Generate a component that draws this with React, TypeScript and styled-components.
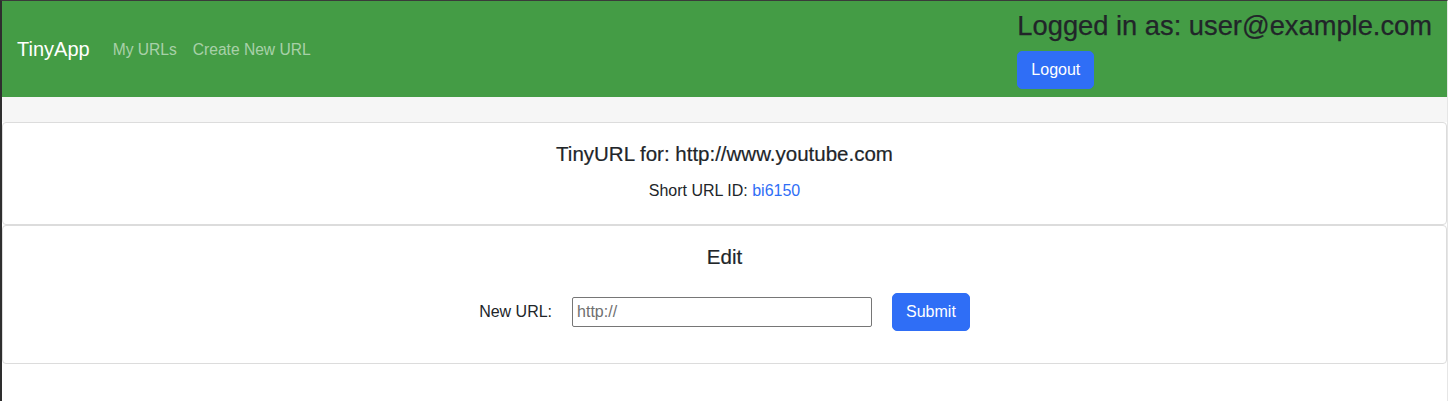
import React from "react";
import styled, { createGlobalStyle } from "styled-components";

const GlobalStyle = createGlobalStyle`
  html, body { margin: 0; padding: 0; background: #ffffff; }
  body {
    font-family: "Liberation Sans", Arial, sans-serif;
    color: #212529;
    font-size: 16px;
    line-height: 1.5;
  }
  * { box-sizing: border-box; }
`;

const Frame = styled.div`
  min-height: 401px;
  border-top: 1px solid #3a3a3a;
  border-left: 2px solid #2e2e2e;
  border-right: 1px solid #e6e6e6;
`;

const Navbar = styled.nav`
  background: #449c45;
  display: flex;
  align-items: center;
  justify-content: space-between;
  padding: 9px 15px 8px 15px;
`;

const Left = styled.div`
  display: flex;
  align-items: center;
`;

const Brand = styled.a`
  color: #ffffff;
  font-size: 20px;
  line-height: 30px;
  margin-right: 15px;
  text-decoration: none;
`;

const NavLink = styled.a`
  color: rgba(255, 255, 255, 0.55);
  font-size: 15.6px;
  padding: 8px;
  text-decoration: none;
`;

const Account = styled.div`
  display: flex;
  flex-direction: column;
  align-items: flex-start;
`;

const LoggedIn = styled.h3`
  margin: 0 0 8px 0;
  font-size: 27.3px;
  font-weight: 500;
  line-height: 1.2;
  color: #212529;
  -webkit-text-stroke: 0.25px #212529;
`;

const Button = styled.button`
  background: #2f6ef6;
  color: #ffffff;
  border: 1px solid #2f6ef6;
  border-radius: 5px;
  font-family: inherit;
  font-size: 16px;
  line-height: 24px;
  padding: 6px 13px;
`;

const Band = styled.div`
  height: 25px;
  background: #f6f6f6;
`;

const Card = styled.section<{ $pad: string }>`
  border: 1px solid #dcdcdc;
  border-radius: 4px;
  background: #fff;
  text-align: center;
  padding: ${(p) => p.$pad};
`;

const Title = styled.h5<{ $gap: number }>`
  margin: 0 0 ${(p) => p.$gap}px 0;
  font-size: 20.5px;
  font-weight: 500;
  line-height: 24px;
  -webkit-text-stroke: 0.2px #212529;
`;

const Text = styled.p`
  margin: 0;
  font-size: 16px;
`;

const Link = styled.a`
  color: #2f6ef6;
  text-decoration: none;
`;

const Row = styled.form`
  display: flex;
  justify-content: center;
  align-items: center;
`;

const Label = styled.label`
  font-size: 16px;
  margin-right: 20px;
`;

const Input = styled.input`
  width: 300px;
  height: 30px;
  border: 1px solid #767676;
  border-radius: 2px;
  padding: 1px 4px;
  font-family: inherit;
  font-size: 16px;
  margin-right: 20px;
  color: #212529;
  &::placeholder { color: #6f6f6f; }
`;

export default function App() {
  return (
    <>
      <GlobalStyle />
      <Frame>
        <Navbar>
          <Left>
            <Brand href="#">TinyApp</Brand>
            <NavLink href="#">My URLs</NavLink>
            <NavLink href="#">Create New URL</NavLink>
          </Left>
          <Account>
            <LoggedIn>Logged in as: user@example.com</LoggedIn>
            <Button>Logout</Button>
          </Account>
        </Navbar>
        <Band />
        <Card $pad="19px 16px 21px">
          <Title $gap={13}>TinyURL for: http://www.youtube.com</Title>
          <Text>
            Short URL ID: <Link href="#">bi6150</Link>
          </Text>
        </Card>
        <Card $pad="19px 16px 32px">
          <Title $gap={24}>Edit</Title>
          <Row onSubmit={(e) => e.preventDefault()}>
            <Label>New URL:</Label>
            <Input type="text" placeholder="http://" />
            <Button type="submit">Submit</Button>
          </Row>
        </Card>
      </Frame>
    </>
  );
}
